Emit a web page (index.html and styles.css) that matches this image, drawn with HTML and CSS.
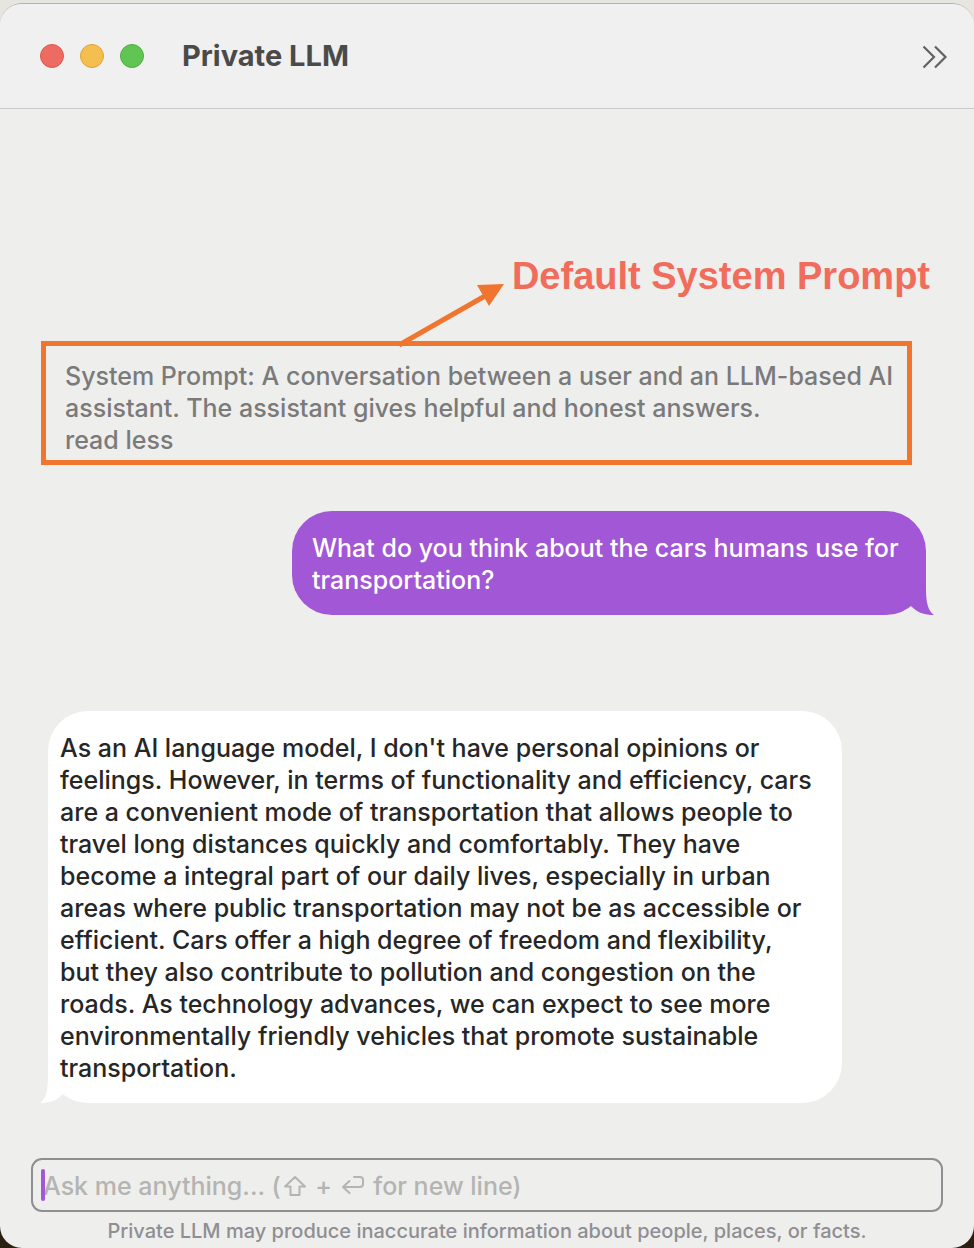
FILE: index.html
```html
<!DOCTYPE html>
<html lang="en">
<head>
<meta charset="utf-8">
<meta name="viewport" content="width=device-width, initial-scale=1">
<title>Private LLM</title>
<link rel="stylesheet" href="styles.css">
</head>
<body>
<div class="window">
  <header class="titlebar">
    <div class="lights">
      <button class="light light-close" aria-label="Close"></button>
      <button class="light light-minimize" aria-label="Minimize"></button>
      <button class="light light-zoom" aria-label="Zoom"></button>
    </div>
    <h1 class="title">Private LLM</h1>
    <button class="more" aria-label="More toolbar items">
      <svg width="26" height="26" viewBox="0 0 26 26" fill="none" stroke="#626262" stroke-width="2.2"><path d="M1.500 3.500 12 14 1.500 24.500M13 3.500 23.500 14 13 24.500"/></svg>
    </button>
  </header>
  <main class="chat">
    <h2 class="note">Default System Prompt</h2>
    <section class="system">
      <svg class="arrow" width="108" height="66" viewBox="0 0 108 66"><path d="M1 63 87 14" stroke="#f0752f" stroke-width="5"/><path d="M106 2 79 3 91 24Z" fill="#f0752f"/></svg>
      <p class="text">System Prompt: A conversation between a user and an LLM-based AI<br>assistant. The assistant gives helpful and honest answers.</p>
      <button class="toggle">read less</button>
    </section>
    <article class="bubble bubble-user">
      <svg class="tail tail-user" width="24" height="40" viewBox="0 0 24 40"><path d="M0 0H16V14C16 27 18 36 24 40C15 40 8 38 2 32L0 30Z" fill="#a257d6"/></svg>
      <p class="text">What do you think about the cars humans use for<br>transportation?</p>
    </article>
    <article class="bubble bubble-model">
      <svg class="tail tail-model" width="24" height="40" viewBox="0 0 24 40"><path d="M24 0H8V14C8 27 6 36 0 40C9 40 16 38 22 32L24 30Z" fill="#fff"/></svg>
      <p class="text">As an AI language model, I don't have personal opinions or<br>feelings. However, in terms of functionality and efficiency, cars<br>are a convenient mode of transportation that allows people to<br>travel long distances quickly and comfortably. They have<br>become a integral part of our daily lives, especially in urban<br>areas where public transportation may not be as accessible or<br>efficient. Cars offer a high degree of freedom and flexibility,<br>but they also contribute to pollution and congestion on the<br>roads. As technology advances, we can expect to see more<br>environmentally friendly vehicles that promote sustainable<br>transportation.</p>
    </article>
  </main>
  <footer class="footer">
    <div class="composer">
      <input class="field" id="message" type="text" autocomplete="off">
      <label class="hint" for="message">Ask me anything... (<svg class="key" width="24" height="22" viewBox="0 0 24 22"><path d="M12 2 22 11.500H16.500V20H7.500V11.500H2Z"/></svg> + <svg class="key" width="24" height="22" viewBox="0 0 24 22"><path d="M13 2H19Q22 2 22 5V9Q22 12 19 12H2M8.500 6 2 12 8.500 18"/></svg> for new line)</label>
      <span class="caret"></span>
    </div>
    <p class="disclaimer">Private LLM may produce inaccurate information about people, places, or facts.</p>
  </footer>
</div>
</body>
</html>
```
FILE: styles.css
```css
* { box-sizing: border-box; }
body {
  margin: 0;
  padding-top: 3px;
  background: linear-gradient(#e6e5df 50%, #2a2112 50%);
  font-family: Inter, "Liberation Sans", sans-serif;
  font-size: 25px;
  font-weight: 450;
  line-height: 32px;
  color: #262626;
}
h1, h2, p { margin: 0; }
button { padding: 0; border: 0; background: none; font: inherit; color: inherit; }
.window {
  display: flex;
  flex-direction: column;
  min-height: calc(100vh - 3px);
  overflow: hidden;
  border-top: 1px solid #b3b2ae;
  border-radius: 22px;
  background: #eeeeec;
}
.titlebar {
  display: flex;
  align-items: center;
  height: 105px;
  padding: 0 26px 0 40px;
  border-bottom: 1px solid #c9c9c8;
  background: #f0f0f0;
}
.lights { display: flex; gap: 16px; }
.light { width: 24px; height: 24px; border: 1px solid; border-radius: 50%; }
.light-close { background: #ed6b60; border-color: #d95a50; }
.light-minimize { background: #f5bf4f; border-color: #dba33c; }
.light-zoom { background: #61c554; border-color: #4fae42; }
.title {
  flex: 1;
  margin-left: 38px;
  font-size: 29px;
  font-weight: 700;
  color: #4a4a4a;
}
.more { display: flex; }
.chat { display: flex; flex-direction: column; flex: 1; padding: 144px 48px 0; }
.note {
  align-self: flex-end;
  margin: 0 -4px 0 0;
  font-family: "Liberation Sans", Arial, sans-serif;
  font-size: 38px;
  font-weight: 700;
  line-height: 46px;
  color: #f06d5c;
}
.system {
  position: relative;
  margin: 42px 14px 0 -7px;
  padding: 14px 0 4px 19px;
  border: 5px solid #f0752f;
  color: #7a7a7a;
}
.toggle { display: block; }
.text { position: relative; white-space: nowrap; }
.arrow { position: absolute; left: 352px; top: -64px; }
.bubble { position: relative; border-radius: 40px; }
.bubble-user {
  align-self: flex-end;
  width: 634px;
  max-width: 100%;
  margin-top: 46px;
  padding: 21px 20px 19px;
  background: #a257d6;
  font-weight: 500;
  color: #fff;
}
.bubble-model {
  width: 794px;
  max-width: 100%;
  margin-top: 96px;
  padding: 21px 12px 19px;
  background: #fff;
}
.tail { position: absolute; bottom: 0; }
.tail-user { right: -8px; }
.tail-model { left: -8px; }
.footer { padding: 55px 31px 0; }
.composer { position: relative; }
.field {
  display: block;
  width: 100%;
  height: 54px;
  padding: 0 12px;
  border: 2px solid #8f8e93;
  border-radius: 11px;
  outline: 0;
  background: transparent;
  font: inherit;
}
.hint {
  position: absolute;
  left: 12px;
  top: 12px;
  color: #b4b4b2;
  white-space: nowrap;
  pointer-events: none;
}
.key {
  margin: 0 2px;
  vertical-align: -2px;
  fill: none;
  stroke: #b4b4b2;
  stroke-width: 2;
  stroke-linejoin: round;
  stroke-linecap: round;
}
.caret {
  position: absolute;
  left: 10px;
  top: 11px;
  width: 4px;
  height: 32px;
  border-radius: 2px;
  background: #a257d6;
}
.disclaimer {
  padding: 3px 0 1px;
  text-align: center;
  font-size: 20px;
  font-weight: 500;
  color: #8f8e93;
}
```
